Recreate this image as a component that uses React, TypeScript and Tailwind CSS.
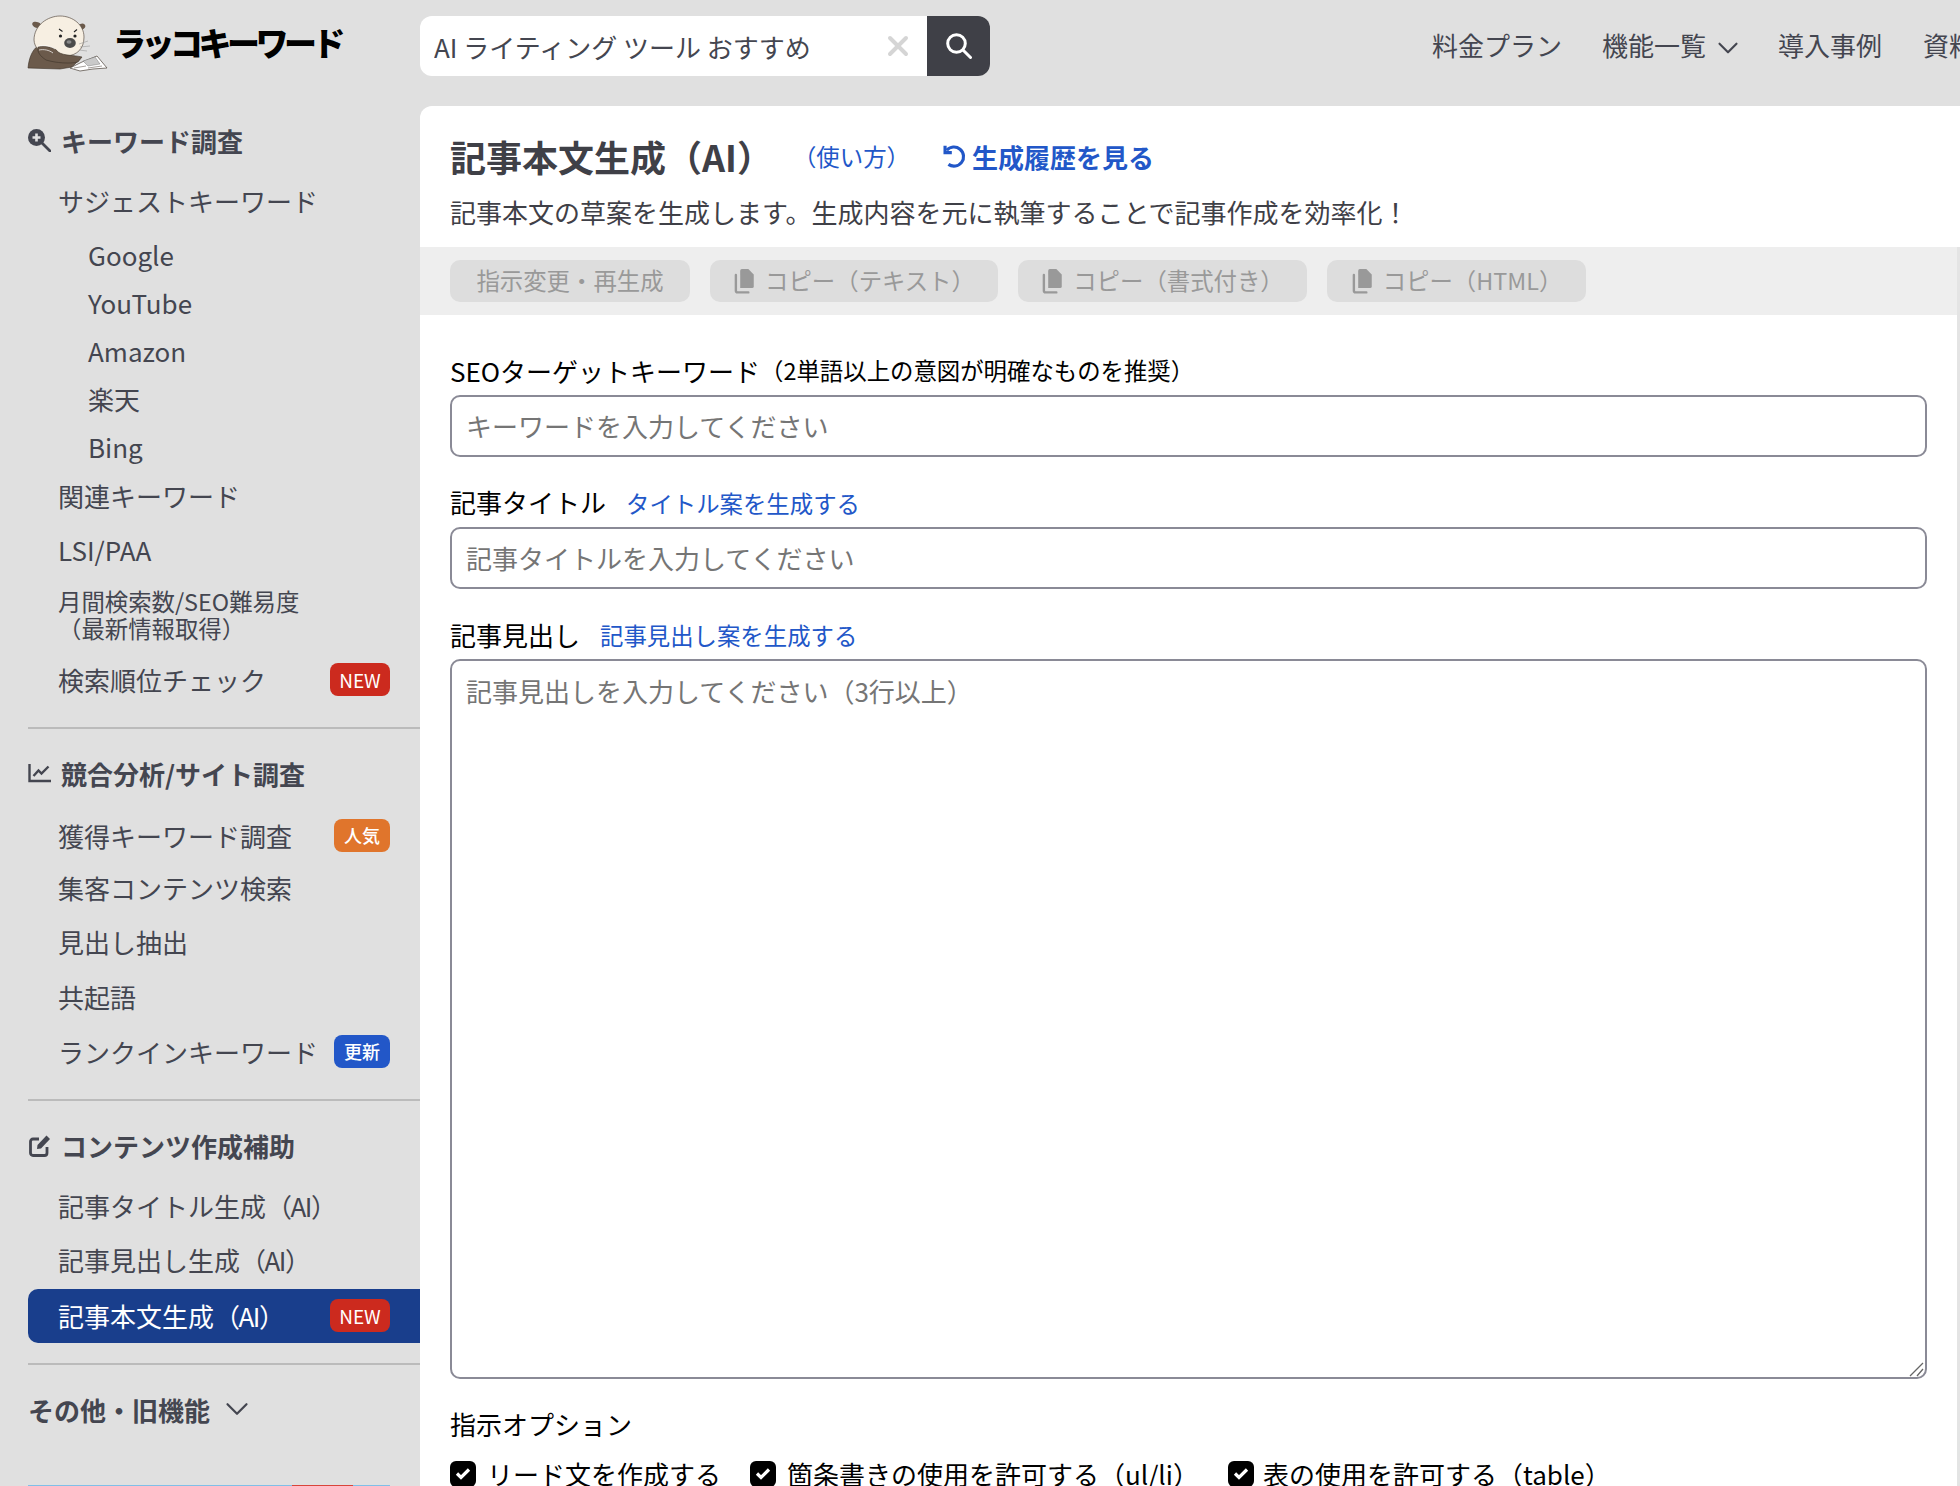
import React from 'react';
import { ChevronDown, X } from 'lucide-react';

const Otter = () => (
  <svg width="90" height="70" viewBox="0 0 90 70" className="flex-none">
    {/* body */}
    <path d="M8 63 C9 52 13 44 18 41 L42 50 L60 54 L52 62 L40 64 Z" fill="#6b5a4b" stroke="#3d3229" strokeWidth="0.6" />
    {/* ears */}
    <ellipse cx="17" cy="20" rx="5" ry="3" fill="#6b5a4b" transform="rotate(20 17 20)" />
    <ellipse cx="61" cy="22" rx="4.5" ry="3" fill="#6b5a4b" transform="rotate(-25 61 22)" />
    {/* head */}
    <path d="M14 35 C14 20 28 11 40 11 C53 11 64 20 64 32 C64 44 57 50 47 51 C33 52 15 50 14 35 Z" fill="#f7efe2" stroke="#5b5046" strokeWidth="0.7" />
    {/* arm */}
    <path d="M18 42 C26 40 36 43 38 47 C44 51 54 50 62 52 L58 57 C50 59 36 58 26 55 C20 51 17 47 18 42 Z" fill="#6b5a4b" stroke="#3d3229" strokeWidth="0.6" />
    <path d="M18 41 C24 40 31 41 35 44 M19 45 C24 44 29 45 33 48" stroke="#ffffff" strokeWidth="0.7" fill="none" />
    {/* face */}
    <ellipse cx="50" cy="38" rx="5.8" ry="5" fill="#4b4b4b" />
    <ellipse cx="49" cy="37" rx="2.5" ry="1.8" fill="#8a8a8a" />
    <circle cx="40.5" cy="31" r="1.6" fill="#222" />
    <circle cx="55" cy="31" r="1.6" fill="#222" />
    <path d="M39 24 L42.5 26.5 M57 24.5 L54 27" stroke="#222" strokeWidth="1.1" />
    <path d="M59 39 L68 36 M60 42 L70 41 M59 45 L67 46" stroke="#9a9a9a" strokeWidth="0.6" />
    {/* book */}
    <path d="M50 63 L62 57 L77 51 L87 63 L73 64 L60 66 Z" fill="#ffffff" stroke="#4a4038" strokeWidth="0.7" />
    <path d="M63 56 L75 52 L80 59 L68 61 Z" fill="#c9c9c9" stroke="#666" strokeWidth="0.4" />
    <path d="M54 63 L66 61 M68 63 L82 61" stroke="#4a4038" strokeWidth="0.5" />
  </svg>
);

const CopyIcon = () => (
  <svg width="22" height="26" viewBox="0 0 20 24" className="flex-none" fill="#999999">
    <path d="M6.5 2.5 A1.5 1.5 0 0 1 8 1 H14 L19 6 V17 A1.5 1.5 0 0 1 17.5 18.5 H6.5 Z" />
    <path d="M2.5 6.5 V21 A1.5 1.5 0 0 0 4 22.5 H14" fill="none" stroke="#999999" strokeWidth="2.2" strokeLinecap="round" />
  </svg>
);

const MagnifyPlus = () => (
  <svg width="23" height="23" viewBox="0 0 23 23">
    <circle cx="8.5" cy="8.5" r="8.5" fill="#444650" />
    <path d="M8.5 4.5 V12.5 M4.5 8.5 H12.5" stroke="#e0e0e0" strokeWidth="2.6" />
    <path d="M14 14 L22 22" stroke="#444650" strokeWidth="2.8" strokeLinecap="round" />
  </svg>
);

const ChartIcon = () => (
  <svg width="23" height="20" viewBox="0 0 23 20" fill="none" stroke="#444650" strokeWidth="2.4">
    <path d="M1.5 1 V18 H23" />
    <path d="M5.5 13 L10.5 7.5 L13.5 10.5 L20.5 3.5" />
  </svg>
);

const EditIcon = () => (
  <svg width="22" height="24" viewBox="0 0 22 24" fill="none" stroke="#444650" strokeWidth="2.8">
    <path d="M18 14 V20 A2.5 2.5 0 0 1 15.5 22.5 H4 A2.5 2.5 0 0 1 1.5 20 V8.5 A2.5 2.5 0 0 1 4 6 H10" />
    <path d="M8 16 L8.5 12 L17.5 2.5 L21 6 L12 15.5 Z" fill="#444650" stroke="none" />
  </svg>
);

const HistoryIcon = () => (
  <svg width="27" height="27" viewBox="0 0 24 24" fill="none" stroke="currentColor" strokeWidth="2.8" className="flex-none">
    <path d="M7.5 19 A8.5 8.5 0 1 0 6 6.5" />
    <path d="M4.5 2.5 V8.5 H10.5" />
  </svg>
);

const SearchIcon = () => (
  <svg width="26" height="26" viewBox="0 0 26 26" fill="none" stroke="#ffffff" strokeWidth="3">
    <circle cx="10.5" cy="10.5" r="8.8" />
    <path d="M17 17 L24.5 24.5" strokeLinecap="round" />
  </svg>
);

const Check = () => (
  <span className="flex h-[26px] w-[26px] flex-none items-center justify-center rounded-[6px] bg-black">
    <svg width="16" height="13" viewBox="0 0 16 13" fill="none">
      <path d="M2 6.5 L6 10.5 L14 2.5" stroke="#ffffff" strokeWidth="3.2" />
    </svg>
  </span>
);

const Badge = ({ kind }: { kind: 'new' | 'pop' | 'upd' }) => {
  if (kind === 'new') {
    return <span className="flex h-[33px] w-[60px] items-center justify-center rounded-[8px] bg-[#cc2a1e] text-[19px] leading-none text-white">NEW</span>;
  }
  if (kind === 'pop') {
    return <span className="flex h-[33px] w-[56px] items-center justify-center rounded-[8px] bg-[#e0752c] text-[18px] font-medium leading-none text-white">人気</span>;
  }
  return <span className="flex h-[33px] w-[56px] items-center justify-center rounded-[8px] bg-[#2257c8] text-[18px] font-medium leading-none text-white">更新</span>;
};

const Item = ({ label, badge, active, cls }: { label: React.ReactNode; badge?: 'new' | 'pop' | 'upd'; active?: boolean; cls?: string }) => (
  <div className={`flex h-[54px] items-center justify-between pl-[30px] pr-[30px] ${active ? 'rounded-l-[10px] bg-[#193e8c] text-white' : ''} ${cls ?? ''}`}>
    <span>{label}</span>
    {badge && <Badge kind={badge} />}
  </div>
);

const Sub = ({ label }: { label: string }) => <div className="flex h-[48px] items-center pl-[60px]">{label}</div>;

const Divider = ({ cls }: { cls: string }) => <div className={`h-[2px] bg-[#bbbbbb] ${cls}`} />;

const Heading = ({ icon, label, cls }: { icon: React.ReactNode; label: string; cls: string }) => (
  <div className={`flex h-[48px] items-center gap-[10px] font-bold ${cls}`}>
    <span className="flex w-[23px] flex-none justify-center">{icon}</span>
    <span>{label}</span>
  </div>
);

const Field = ({ label, placeholder }: { label: React.ReactNode; placeholder: string }) => (
  <>
    <div className="flex h-[40px] items-center text-black">{label}</div>
    <input
      placeholder={placeholder}
      className="mt-[4px] h-[62px] w-full rounded-[10px] border-2 border-[#8a8a96] px-[14px] pb-[2px] text-[26px] outline-none placeholder:text-[#757575]"
    />
  </>
);

const Sidebar = () => (
  <aside className="w-[420px] flex-none pl-[28px] pt-[10px] text-[26px] text-[#444650]">
    <Heading icon={<MagnifyPlus />} label="キーワード調査" cls="" />
    <div className="mt-[9px]">
      <Item label="サジェストキーワード" />
      <div className="-mb-[2px] mt-[3px]">
        <Sub label="Google" />
        <Sub label="YouTube" />
        <Sub label="Amazon" />
        <Sub label="楽天" />
        <Sub label="Bing" />
      </div>
      <Item label="関連キーワード" />
      <Item label="LSI/PAA" />
      <div className="mt-[12px] h-[54px] pl-[30px] text-[23.4px] leading-[27px]">
        月間検索数/SEO難易度
        <br />
        （最新情報取得）
      </div>
      <Item label="検索順位チェック" badge="new" cls="mt-[10px]" />
    </div>
    <Divider cls="mt-[21px]" />
    <Heading icon={<ChartIcon />} label="競合分析/サイト調査" cls="mt-[20px]" />
    <div className="mt-[11px]">
      <Item label="獲得キーワード調査" badge="pop" />
      <Item label="集客コンテンツ検索" cls="-mt-[2px]" />
      <Item label="見出し抽出" />
      <Item label="共起語" cls="mt-px" />
      <Item label="ランクインキーワード" badge="upd" cls="mt-px" />
    </div>
    <Divider cls="mt-[21px]" />
    <Heading icon={<EditIcon />} label="コンテンツ作成補助" cls="mt-[20px]" />
    <div className="mt-[10px]">
      <Item label={<>記事タイトル生成<span className="tracking-[-1.5px]">（AI）</span></>} cls="pb-[2px]" />
      <Item label={<>記事見出し生成<span className="tracking-[-1.5px]">（AI）</span></>} cls="pb-[2px]" />
      <Item label={<>記事本文生成<span className="tracking-[-1.5px]">（AI）</span></>} badge="new" active cls="mt-[2px] pb-[1px]" />
    </div>
    <Divider cls="mt-[20px]" />
    <div className="mt-[20px] flex h-[48px] items-center gap-[8px] font-bold">
      <span>その他・旧機能</span>
      <ChevronDown size={38} strokeWidth={1.4} />
    </div>
    <div className="mt-[52px] flex h-[4px] w-[362px] bg-[#7fbfe8]">
      <div className="ml-[264px] w-[61px] bg-[#d9443a]" />
    </div>
  </aside>
);

const Main = () => (
  <main className="min-w-0 flex-1 rounded-tl-[12px] bg-white">
    <div className="px-[30px] pt-[27px]">
      <div className="flex h-[48px] items-center">
        <h1 className="-translate-y-px text-[36px] font-bold leading-none text-[#3f4047]">記事本文生成（AI）</h1>
        <a className="ml-[20px] text-[23.4px] text-[#2257c8]">（使い方）</a>
        <a className="ml-[30px] flex -translate-y-px items-center gap-[5px] text-[26px] font-bold text-[#2257c8]">
          <HistoryIcon />
          生成履歴を見る
        </a>
      </div>
      <p className="mb-[15px] mt-[11px] h-[40px] leading-[40px] text-[#3f4047]">
        記事本文の草案を生成します。生成内容を元に執筆することで記事作成を効率化！
      </p>
    </div>
    <div className="flex h-[68px] items-start gap-[20px] border-r-[3px] border-[#e4e4e4] bg-[#eeeeee] pl-[30px] pt-[13px] text-[23.4px] text-[#999999]">
      <div className="flex h-[42px] w-[240px] items-center justify-center rounded-[10px] bg-[#dddddd]">指示変更・再生成</div>
      <div className="flex h-[42px] w-[288px] items-center justify-center gap-[10px] rounded-[10px] bg-[#dddddd]">
        <CopyIcon />
        コピー（テキスト）
      </div>
      <div className="flex h-[42px] w-[289px] items-center justify-center gap-[10px] rounded-[10px] bg-[#dddddd]">
        <CopyIcon />
        コピー（書式付き）
      </div>
      <div className="flex h-[42px] w-[259px] items-center justify-center gap-[10px] rounded-[10px] bg-[#dddddd]">
        <CopyIcon />
        コピー（HTML）
      </div>
    </div>
    <div className="border-r-[3px] border-[#e4e4e4] pl-[30px] pr-[30px] pt-[36px]">
      <Field
        label={
          <>
            <span className="-translate-y-px">SEOターゲットキーワード</span>
            <span className="text-[23.4px]">（2単語以上の意図が明確なものを推奨）</span>
          </>
        }
        placeholder="キーワードを入力してください"
      />
      <div className="mt-[26px]">
        <Field
          label={
            <>
              <span className="-translate-y-[2px]">記事タイトル</span>
              <a className="ml-[20px] translate-y-px text-[23.4px] text-[#2257c8]">タイトル案を生成する</a>
            </>
          }
          placeholder="記事タイトルを入力してください"
        />
      </div>
      <div className="mt-[26px] flex h-[40px] items-center text-black">
        <span className="-translate-y-px">記事見出し</span>
        <a className="ml-[20px] translate-y-px text-[23.4px] text-[#2257c8]">記事見出し案を生成する</a>
      </div>
      <div className="relative mt-[4px]">
        <textarea
          placeholder="記事見出しを入力してください（3行以上）"
          className="block h-[720px] w-full resize-none rounded-[10px] border-2 border-[#8a8a96] px-[14px] py-[10px] text-[26px] outline-none placeholder:text-[#757575]"
        />
        <svg width="20" height="20" viewBox="0 0 20 20" className="absolute bottom-0 right-0" fill="none" stroke="#666666" strokeWidth="1.3">
          <path d="M3 17 L16 4 M10 17 L16 10" />
        </svg>
      </div>
      <div className="mt-[24px] flex h-[40px] items-center text-black">指示オプション</div>
      <div className="mt-[11px] flex items-center text-black">
        <Check />
        <span className="ml-[11px] w-[263px] flex-none">リード文を作成する</span>
        <Check />
        <span className="ml-[11px] w-[441px] flex-none">箇条書きの使用を許可する（ul/li）</span>
        <Check />
        <span className="ml-[9px]">表の使用を許可する（table）</span>
      </div>
    </div>
  </main>
);

export default function App() {
  return (
    <div className="h-[1486px] w-[1960px] overflow-hidden bg-[#e0e0e0] font-['Noto_Sans_CJK_JP',sans-serif] text-[26px]">
      <header className="flex h-[106px] items-start">
        <div className="flex w-[420px] flex-none items-start">
          <div className="ml-[20px] mt-[5px] flex items-center">
            <Otter />
            <span className="ml-[3px] mt-[5px] whitespace-nowrap text-[33px] font-black leading-none tracking-[-4.5px] text-black">
              ラッコキーワード
            </span>
          </div>
        </div>
        <div className="mt-[16px] flex h-[60px] w-[570px] flex-none items-center overflow-hidden rounded-[12px] bg-white">
          <input defaultValue="AI ライティング ツール おすすめ" className="h-full min-w-0 flex-1 pl-[14px] text-[26px] text-[#444650] outline-none" />
          <X size={32} strokeWidth={3} className="mr-[13px] flex-none text-[#d5d5d5]" />
          <button className="flex h-full w-[63px] flex-none items-center justify-center bg-[#3f4047]">
            <SearchIcon />
          </button>
        </div>
        <nav className="ml-[442px] mt-[25px] flex flex-none items-center whitespace-nowrap text-[#444650]">
          <span>料金プラン</span>
          <span className="ml-[40px]">機能一覧</span>
          <ChevronDown size={34} strokeWidth={1.5} className="ml-[5px] translate-y-[3px]" />
          <span className="ml-[33px]">導入事例</span>
          <span className="ml-[41px]">資料請求</span>
        </nav>
      </header>
      <div className="flex">
        <Sidebar />
        <Main />
      </div>
    </div>
  );
}
